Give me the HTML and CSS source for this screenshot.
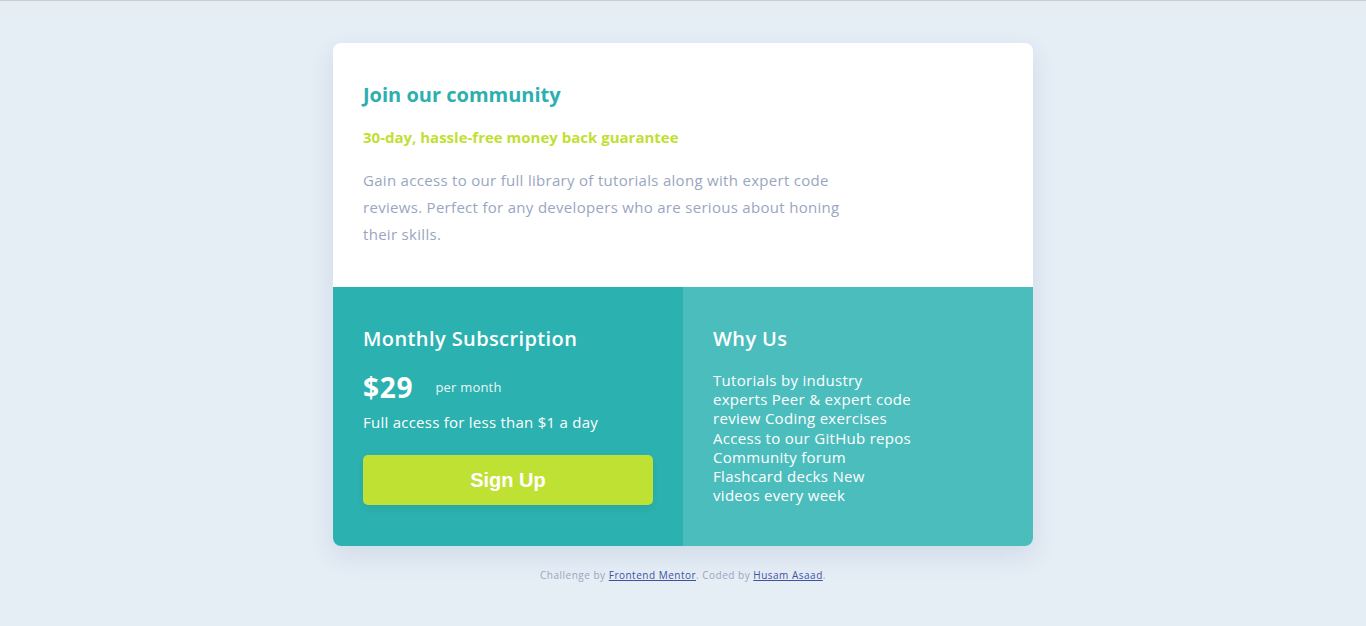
FILE: index.html
```html
<!DOCTYPE html>
<html lang="en">
<head>
<meta charset="utf-8">
<title>Single price grid component</title>
<link rel="stylesheet" href="styles.css">
</head>
<body>
  <main class="card">
    <section class="intro">
      <h1 class="intro-title">Join our community</h1>
      <p class="intro-guarantee">30-day, hassle-free money back guarantee</p>
      <p class="intro-text">Gain access to our full library of tutorials along with expert code reviews. Perfect for any developers who are serious about honing their skills.</p>
    </section>
    <div class="bottom">
      <section class="subscription">
        <h2 class="section-title">Monthly Subscription</h2>
        <div class="price-row">
          <span class="price">$29</span>
          <span class="per">per month</span>
        </div>
        <p class="sub-text">Full access for less than $1 a day</p>
        <button class="signup" type="button">Sign Up</button>
      </section>
      <section class="why">
        <h2 class="section-title">Why Us</h2>
        <p class="why-list">Tutorials by industry experts Peer &amp; expert code review Coding exercises Access to our GitHub repos Community forum Flashcard decks New videos every week</p>
      </section>
    </div>
  </main>
  <footer class="attribution">
    Challenge by <a href="#">Frontend Mentor</a>. Coded by <a href="#">Husam Asaad</a>.
  </footer>
</body>
</html>
```

FILE: styles.css
```css
* { box-sizing: border-box; }

body {
  margin: 0;
  min-height: 626px;
  border-top: 1px solid #cbcdcf;
  background: #e5edf5;
  font-family: "Open Sans", "DejaVu Sans", sans-serif;
  display: flex;
  flex-direction: column;
  align-items: center;
  padding-top: 42px;
}

.card {
  width: 700px;
  border-radius: 8px;
  overflow: hidden;
  background: #fff;
  box-shadow: 0 10px 24px rgba(60, 100, 140, 0.12);
}

.intro {
  padding: 40px 30px 39px;
}

.intro-title {
  margin: 0;
  font-size: 20px;
  line-height: 24px;
  font-weight: 700;
  color: #2bb0ae;
}

.intro-guarantee {
  margin: 20px 0 0;
  font-size: 15px;
  line-height: 20px;
  font-weight: 700;
  color: #bfdf33;
}

.intro-text {
  margin: 20px 0 0;
  max-width: 480px;
  font-size: 15px;
  line-height: 27px;
  letter-spacing: 0.3px;
  color: #9aa6bf;
}

.bottom {
  display: grid;
  grid-template-columns: 1fr 1fr;
  color: #fff;
}

.subscription {
  background: #2bb1af;
  padding: 40px 30px 41px;
}

.why {
  background: #4bbdbd;
  padding: 40px 30px;
}

.section-title {
  margin: 0;
  font-size: 20px;
  line-height: 24px;
  font-weight: 600;
  letter-spacing: 0.4px;
}

.price-row {
  display: flex;
  align-items: center;
  gap: 22px;
  margin-top: 19px;
}

.price {
  font-size: 28px;
  line-height: 34px;
  font-weight: 700;
  letter-spacing: 0.8px;
}

.per {
  font-size: 13px;
  letter-spacing: 0.2px;
  opacity: 0.9;
}

.sub-text {
  margin: 8px 0 0;
  font-size: 15px;
  line-height: 20px;
  letter-spacing: 0.25px;
}

.signup {
  display: block;
  width: 290px;
  height: 50px;
  margin-top: 23px;
  border: 0;
  border-radius: 5px;
  background: #bfe133;
  color: #fff;
  font-family: "Liberation Sans", Arial, sans-serif;
  font-size: 20px;
  font-weight: 700;
  cursor: pointer;
  box-shadow: 0 4px 8px rgba(0, 0, 0, 0.05);
}

.why-list {
  margin: 20px 0 0;
  max-width: 200px;
  font-size: 15px;
  line-height: 19.2px;
  letter-spacing: 0.3px;
}

.attribution {
  margin-top: 22px;
  font-size: 10px;
  color: #9aa6bf;
  letter-spacing: 0.5px;
}

.attribution a {
  color: #3e52a3;
}
```
